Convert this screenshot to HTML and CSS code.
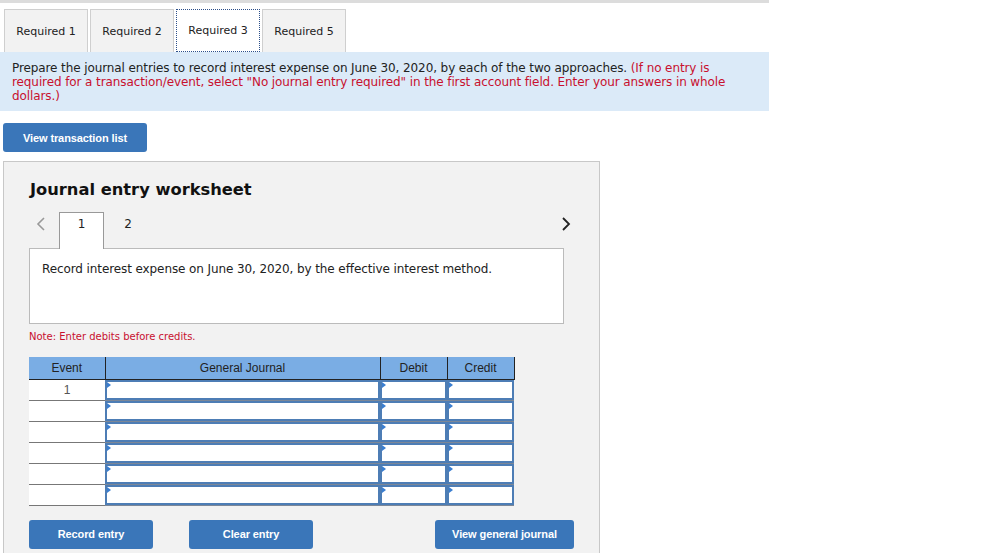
FILE: index.html
```html
<!DOCTYPE html>
<html>
<head>
<meta charset="utf-8">
<link rel="stylesheet" href="styles.css">
</head>
<body>
<div class="page">
  <div class="topbar"></div>
  <div class="tabs">
    <div class="tab">Required 1</div>
    <div class="tab">Required 2</div>
    <div class="tab active">Required 3</div>
    <div class="tab">Required 5</div>
  </div>
  <div class="info">Prepare the journal entries to record interest expense on June 30, 2020, by each of the two approaches. <span class="red">(If no entry is required for a transaction/event, select "No journal entry required" in the first account field. Enter your answers in whole dollars.)</span></div>
  <button class="btn btn-list">View transaction list</button>
  <div class="panel">
    <h2 class="title">Journal entry worksheet</h2>
    <div class="nav">
      <span class="arrow prev"><svg width="10" height="14" viewBox="0 0 10 14"><path d="M8 1 L2 7 L8 13" fill="none" stroke="#999" stroke-width="1.6"/></svg></span>
      <div class="ptab active">1</div>
      <div class="ptab">2</div>
      <span class="spacer"></span>
      <span class="arrow next"><svg width="10" height="14" viewBox="0 0 10 14"><path d="M2 1 L8 7 L2 13" fill="none" stroke="#222" stroke-width="1.8"/></svg></span>
    </div>
    <div class="desc">Record interest expense on June 30, 2020, by the effective interest method.</div>
    <div class="note">Note: Enter debits before credits.</div>
    <table class="journal">
      <thead>
        <tr><th class="c-ev">Event</th><th class="c-gj">General Journal</th><th class="c-dr">Debit</th><th class="c-cr">Credit</th></tr>
      </thead>
      <tbody>
        <tr><td class="ev">1</td><td class="in"><div class="box"></div></td><td class="in"><div class="box"></div></td><td class="in"><div class="box"></div></td></tr>
        <tr><td class="ev"></td><td class="in"><div class="box"></div></td><td class="in"><div class="box"></div></td><td class="in"><div class="box"></div></td></tr>
        <tr><td class="ev"></td><td class="in"><div class="box"></div></td><td class="in"><div class="box"></div></td><td class="in"><div class="box"></div></td></tr>
        <tr><td class="ev"></td><td class="in"><div class="box"></div></td><td class="in"><div class="box"></div></td><td class="in"><div class="box"></div></td></tr>
        <tr><td class="ev"></td><td class="in"><div class="box"></div></td><td class="in"><div class="box"></div></td><td class="in"><div class="box"></div></td></tr>
        <tr><td class="ev"></td><td class="in"><div class="box"></div></td><td class="in"><div class="box"></div></td><td class="in"><div class="box"></div></td></tr>
      </tbody>
    </table>
    <div class="actions">
      <button class="btn btn-rec">Record entry</button>
      <button class="btn btn-clear">Clear entry</button>
      <span class="spacer"></span>
      <button class="btn btn-view">View general journal</button>
    </div>
  </div>
</div>
</body>
</html>
```

FILE: styles.css
```css
html, body { margin: 0; padding: 0; background: #fff; }
body { font-family: "DejaVu Sans", Verdana, sans-serif; color: #222; overflow: hidden; }
.page { width: 769px; }
.topbar { height: 3px; background: #dcdcdc; }
.tabs { display: flex; gap: 2px; padding: 6px 0 0 4px; height: 43px; }
.tab {
  width: 82px; height: 42px; background: #f2f2f2;
  border: 1px solid #cfcfcf; border-bottom: none;
  font-size: 11px; display: flex; align-items: center; justify-content: center;
  color: #222;
}
.tab.active { background: #fff; border: 1px dotted #2c4f8a; border-bottom: 1px dotted #2c4f8a; height: 41px; }
.info {
  background: #dbeaf8; padding: 9px 12px 8px 12px;
  font-size: 12px; letter-spacing: -0.1px; line-height: 14px; color: #222;
}
.red { color: #c8102e; }
.btn {
  background: #3a76b9; color: #fff; border: none; border-radius: 3px;
  font-family: "Liberation Sans", Arial, sans-serif; font-weight: bold;
  font-size: 11px; letter-spacing: -0.1px; height: 29px; padding: 0; cursor: pointer;
}
.btn-list { margin: 12px 0 0 3px; width: 144px; display: block; }
.panel {
  margin: 9px 0 0 3px; width: 597px; height: 400px;
  background: #f2f2f2; border: 1px solid #c8c8c8;
  padding: 0 0 0 25px; box-sizing: border-box;
}
.title { margin: 18px 0 0 1px; font-size: 16.3px; font-weight: bold; line-height: 20px; color: #111; }
.nav { display: flex; align-items: flex-start; margin-top: 12px; width: 545px; height: 36px; }
.arrow { display: flex; align-items: center; height: 14px; margin-top: 5px; }
.prev { width: 30px; padding-left: 7px; box-sizing: border-box; }
.next { padding-right: 3px; }
.spacer { flex: 1; }
.ptab { width: 45px; height: 36px; display: flex; align-items: flex-start; justify-content: center; padding-top: 5px; padding-left: 3px; line-height: 14px; font-size: 12px; box-sizing: border-box; }
.ptab.active { background: #fff; border: 1px solid #999; border-bottom: none; height: 37px; margin-bottom: -1px; padding-top: 4px; padding-left: 0; position: relative; z-index: 1; }
.desc {
  width: 535px; height: 76px; box-sizing: border-box;
  background: #fff; border: 1px solid #bbb;
  padding: 12px 12px; font-size: 12px; letter-spacing: -0.1px; line-height: 16px;
}
.note { color: #c8102e; font-size: 10px; margin-top: 7px; line-height: 12px; }
.journal {
  margin-top: 14px; border-collapse: collapse; table-layout: fixed;
  font-family: "Liberation Sans", Arial, sans-serif; font-size: 12px;
}
.journal th {
  background: #7aade4; color: #222; font-weight: normal; height: 22px; padding: 0;
  border-left: 1px solid #222; border-bottom: 1px solid #222; box-sizing: border-box;
}
.journal th:first-child { border-left: none; }
.journal th.c-cr { border-right: 1px solid #222; }
.c-ev { width: 76px; }
.c-gj { width: 275px; }
.c-dr { width: 67px; }
.c-cr { width: 67px; }
.journal td { padding: 0; height: 20px; }
.journal td.ev { background: #fff; border-bottom: 1px solid #777; text-align: center; color: #555; vertical-align: middle; }
.journal td.in { background: #fff; border-bottom: 1px solid #7c8797; }
.box {
  height: 20px; box-sizing: border-box; border: 2px solid #4d7db5; background: #fff; position: relative;
}
.box::before {
  content: ""; position: absolute; left: 0; top: 0;
  border-left: 4px solid #3a7ed0; border-top: 3px solid transparent; border-bottom: 3px solid transparent;
}
.actions { display: flex; margin-top: 14px; width: 545px; gap: 36px; }
.actions .spacer { flex: 1; }
.btn-rec, .btn-clear { width: 124px; }
.btn-view { width: 139px; }
```
